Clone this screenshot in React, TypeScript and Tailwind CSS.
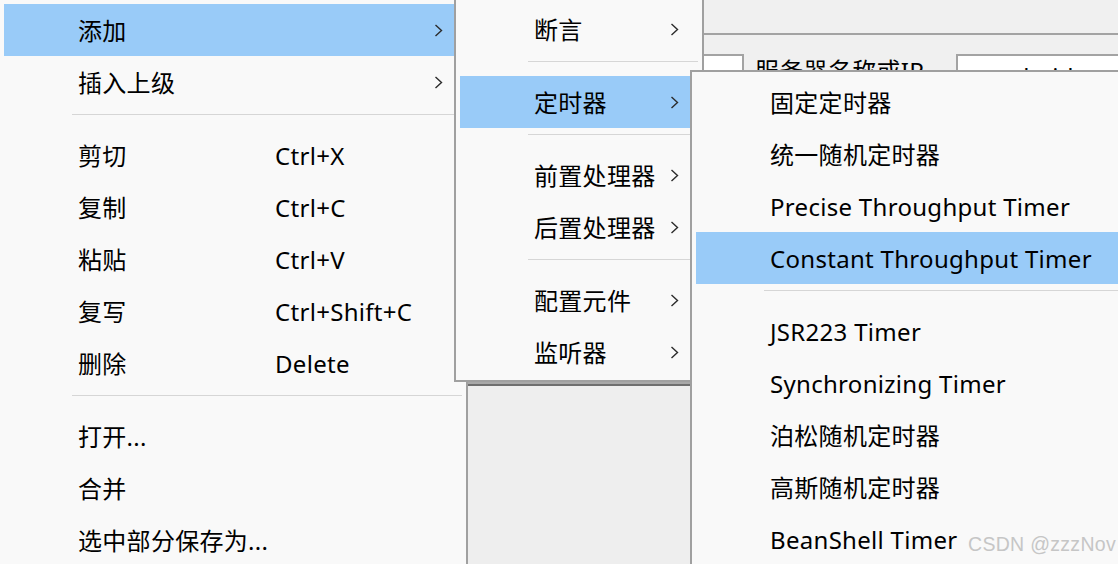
type Item =
  | { label: string; shortcut?: string; sub?: boolean; active?: boolean }
  | 'sep';

const mainMenu: Item[] = [
  { label: '添加', sub: true, active: true },
  { label: '插入上级', sub: true },
  'sep',
  { label: '剪切', shortcut: 'Ctrl+X' },
  { label: '复制', shortcut: 'Ctrl+C' },
  { label: '粘贴', shortcut: 'Ctrl+V' },
  { label: '复写', shortcut: 'Ctrl+Shift+C' },
  { label: '删除', shortcut: 'Delete' },
  'sep',
  { label: '打开...' },
  { label: '合并' },
  { label: '选中部分保存为...' },
];

const addMenu: Item[] = [
  { label: '断言', sub: true },
  'sep',
  { label: '定时器', sub: true, active: true },
  'sep',
  { label: '前置处理器', sub: true },
  { label: '后置处理器', sub: true },
  'sep',
  { label: '配置元件', sub: true },
  { label: '监听器', sub: true },
];

const timerMenu: Item[] = [
  { label: '固定定时器' },
  { label: '统一随机定时器' },
  { label: 'Precise Throughput Timer' },
  { label: 'Constant Throughput Timer', active: true },
  'sep',
  { label: 'JSR223 Timer' },
  { label: 'Synchronizing Timer' },
  { label: '泊松随机定时器' },
  { label: '高斯随机定时器' },
  { label: 'BeanShell Timer' },
];

const Chevron = () => (
  <svg width="9" height="13" viewBox="0 0 9 13" className="shrink-0">
    <polyline points="1.5,1 7.5,6.5 1.5,12" fill="none" stroke="#2b2b2b" strokeWidth="1.4" />
  </svg>
);

const MenuItems = ({ items, shortcutCol }: { items: Item[]; shortcutCol?: boolean }) => (
  <>
    {items.map((it, i) =>
      it === 'sep' ? (
        <div key={i} className="h-[21px] pt-[6px] pl-[68px]">
          <div className="h-px bg-[#d6d6d6]" />
        </div>
      ) : (
        <div
          key={i}
          className={`flex h-[52px] items-center pl-[74px] pr-[19px] whitespace-nowrap ${it.active ? 'bg-[#99cbf8]' : ''}`}
        >
          <span className={`pt-[2px] ${shortcutCol ? 'w-[197px]' : ''}`}>{it.label}</span>
          {it.shortcut && <span className="pt-[2px]">{it.shortcut}</span>}
          <span className="flex-1" />
          {it.sub && <Chevron />}
        </div>
      )
    )}
  </>
);

export default function App() {
  return (
    <div className="relative w-[1118px] h-[564px] overflow-hidden bg-[#f0f0f0] text-[24px] tracking-[0.3px] text-black font-['Noto_Sans','Noto_Sans_CJK_SC',sans-serif]">
      {/* application window behind the popups */}
      <div className="flex flex-col h-full">
        <div className="h-[33px] shrink-0" />
        <div className="h-[2px] shrink-0 bg-[#a3a3a3]" />
        <div className="h-[19px] shrink-0" />
        <div className="flex h-[328px] shrink-0 items-start pl-[700px]">
          <div className="w-[44px] h-[40px] shrink-0 bg-white border-t-2 border-r-2 border-[#a3a3a3]" />
          <span className="ml-[11px] mt-[2px] shrink-0 leading-[30px] whitespace-nowrap">服务器名称或IP</span>
          <div className="ml-[32px] min-w-0 flex-1 h-[40px] overflow-hidden bg-white border-t-2 border-l-2 border-[#a3a3a3] pl-[2px] pt-[6px] leading-[30px] whitespace-nowrap">
            www.baidu.com
          </div>
        </div>
        <div className="flex-1 border-t-2 border-[#a8a8a8]">
          <div className="h-full border-t-2 border-[#6f6f6f] bg-[#eeeeee]" />
        </div>
      </div>

      {/* context menu */}
      <div className="absolute left-[-2px] top-[-2px] w-[470px] h-[580px] border-2 border-[#a0a0a0] bg-[#f9f9f9] p-[4px]">
        <MenuItems items={mainMenu} shortcutCol />
      </div>

      {/* 添加 submenu */}
      <div className="absolute left-[454px] top-[-3px] w-[250px] border-2 border-[#a0a0a0] bg-[#f9f9f9] px-[4px] pt-[4px] pb-[2px]">
        <MenuItems items={addMenu} />
      </div>

      {/* 定时器 submenu */}
      <div className="absolute left-[690px] top-[70px] w-[440px] h-[520px] border-2 border-[#a0a0a0] bg-[#f9f9f9] p-[4px]">
        <MenuItems items={timerMenu} />
      </div>

      <div className="absolute left-[968px] top-[530px] text-[19.5px] leading-[28px] text-[#c6c6c6] font-['Liberation_Sans',sans-serif] whitespace-nowrap">
        CSDN @zzzNov
      </div>
    </div>
  );
}
